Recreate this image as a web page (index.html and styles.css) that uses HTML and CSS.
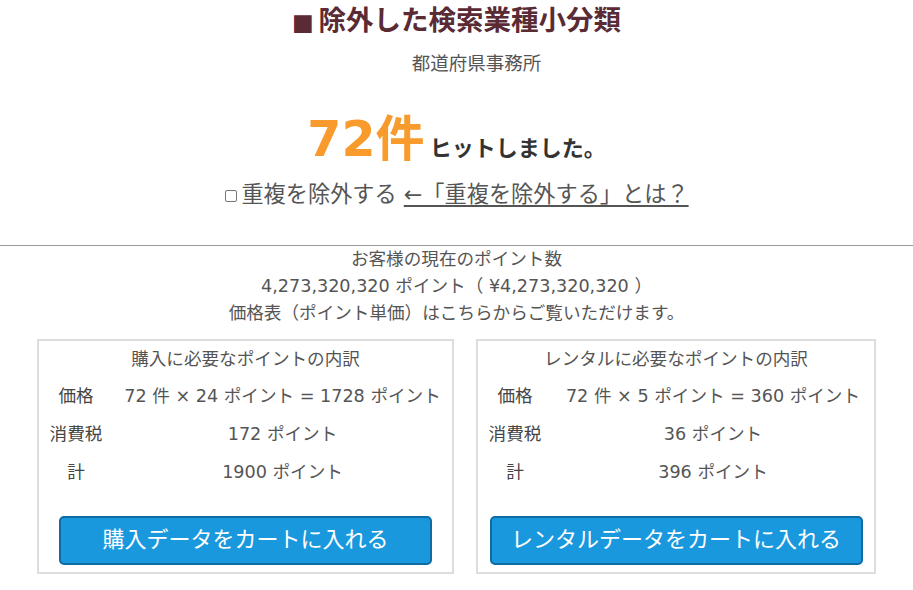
FILE: index.html
```html
<!DOCTYPE html>
<html lang="ja">
<head>
<meta charset="utf-8">
<title>除外した検索業種小分類</title>
<link rel="stylesheet" href="styles.css">
</head>
<body>
<header class="head">
  <h1 class="title"><span class="title-mark">■</span>除外した検索業種小分類</h1>
  <p class="subtitle">都道府県事務所</p>
  <p class="hits"><span class="hits-num">72件</span> <span class="hits-text">ヒットしました。</span></p>
  <p class="dedupe"><input type="checkbox" class="check"><span class="dedupe-label">重複を除外する</span> <a href="#" class="dedupe-link">←「重複を除外する」とは？</a></p>
</header>
<hr class="rule">
<section class="points">
  <p class="points-line">お客様の現在のポイント数</p>
  <p class="points-line">4,273,320,320 ポイント（ ¥4,273,320,320 ）</p>
  <p class="points-line">価格表（ポイント単価）はこちらからご覧いただけます。</p>
</section>
<section class="boxes">
  <div class="box">
    <div class="box-title">購入に必要なポイントの内訳</div>
    <div class="row"><span class="label">価格</span><span class="value">72 件 × 24 ポイント = 1728 ポイント</span></div>
    <div class="row"><span class="label">消費税</span><span class="value">172 ポイント</span></div>
    <div class="row"><span class="label">計</span><span class="value">1900 ポイント</span></div>
    <button class="btn">購入データをカートに入れる</button>
  </div>
  <div class="box">
    <div class="box-title">レンタルに必要なポイントの内訳</div>
    <div class="row"><span class="label">価格</span><span class="value">72 件 × 5 ポイント = 360 ポイント</span></div>
    <div class="row"><span class="label">消費税</span><span class="value">36 ポイント</span></div>
    <div class="row"><span class="label">計</span><span class="value">396 ポイント</span></div>
    <button class="btn">レンタルデータをカートに入れる</button>
  </div>
</section>
</body>
</html>
```

FILE: styles.css
```css
* { box-sizing: border-box; }
html, body { margin: 0; padding: 0; background: #fff; }
body {
  font-family: "DejaVu Sans", "Noto Sans CJK JP", sans-serif;
  color: #555;
  text-align: center;
}
p { margin: 0; }

.title {
  margin: 0;
  font-size: 27.5px;
  line-height: 41px;
  font-weight: bold;
  color: #5b2b35;
}
.title-mark {
  font-size: 23px;
  margin-right: 5px;
}
.subtitle {
  padding-left: 40px;
  font-size: 18.5px;
  line-height: 42px;
  color: #555;
}
.hits {
  margin-top: 25px;
  line-height: 60px;
  height: 60px;
}
.hits-num {
  font-size: 49px;
  font-weight: bold;
  color: #f89a2c;
}
.hits-text {
  font-size: 22px;
  font-weight: bold;
  color: #333;
}
.dedupe {
  margin-top: 8px;
  height: 32px;
  font-size: 22.2px;
  line-height: 32px;
  color: #555;
}
.check {
  appearance: none;
  -webkit-appearance: none;
  width: 12px;
  height: 12px;
  margin: 0 4px 0 1px;
  border: 1px solid #777;
  border-radius: 2px;
  background: #fff;
  vertical-align: 0;
}
.dedupe-link {
  color: #555;
  text-decoration: underline;
  text-decoration-thickness: 2px;
  text-underline-offset: 3px;
}
.rule {
  margin: 35px 0 0;
  border: 0;
  border-top: 1px solid #999;
  height: 0;
}
.points {
  font-size: 17.6px;
  line-height: 27px;
  color: #555;
}
.boxes {
  display: grid;
  grid-template-columns: 417px 400px;
  gap: 22px;
  justify-content: center;
  margin-top: 12px;
}
.box {
  border: 2px solid #ddd;
  padding: 0 0 7px;
  font-size: 17.6px;
  color: #555;
}
.box-title {
  line-height: 36px;
}
.row {
  display: grid;
  grid-template-columns: 74px 1fr;
  line-height: 38px;
}
.label { color: #444; }
.btn {
  display: block;
  width: 373px;
  height: 49px;
  margin: 25px auto 0;
  padding: 0 0 2px;
  background: #1a98de;
  border: 2px solid #0e6ba3;
  border-radius: 5px;
  color: #fff;
  font-family: "DejaVu Sans", "Noto Sans CJK JP", sans-serif;
  font-size: 22px;
  line-height: 38px;
  cursor: pointer;
}
```
